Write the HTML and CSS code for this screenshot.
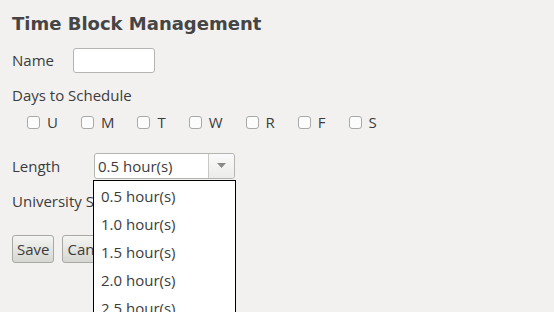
FILE: index.html
```html
<!DOCTYPE html>
<html>
<head>
<meta charset="utf-8">
<link rel="stylesheet" href="styles.css">
</head>
<body>
<div class="page">
  <h1 class="title">Time Block Management</h1>
  <div class="row name-row">
    <span class="label">Name</span>
    <span class="text-input"></span>
  </div>
  <div class="days-label">Days to Schedule</div>
  <div class="days">
    <span class="day"><span class="cb"></span>U</span>
    <span class="day"><span class="cb"></span>M</span>
    <span class="day"><span class="cb"></span>T</span>
    <span class="day"><span class="cb"></span>W</span>
    <span class="day"><span class="cb"></span>R</span>
    <span class="day"><span class="cb"></span>F</span>
    <span class="day"><span class="cb"></span>S</span>
  </div>
  <div class="row length-row">
    <span class="label">Length</span>
    <div class="select-wrap">
      <div class="select">
        <span class="select-value">0.5 hour(s)</span>
        <span class="select-arrow"><svg width="9" height="6" viewBox="0 0 9 6"><path d="M0 0 H9 L4.5 5 Z" fill="#8a8a8a"/></svg></span>
      </div>
      <ul class="dropdown">
        <li>0.5 hour(s)</li>
        <li>1.0 hour(s)</li>
        <li>1.5 hour(s)</li>
        <li>2.0 hour(s)</li>
        <li>2.5 hour(s)</li>
      </ul>
    </div>
  </div>
  <div class="univ">University Schedule</div>
  <div class="buttons">
    <button class="btn">Save</button>
    <button class="btn">Cancel</button>
  </div>
</div>
</body>
</html>
```

FILE: styles.css
```css
html, body {
  margin: 0;
  padding: 0;
  background: #f2f1f0;
}
body {
  font-family: "Open Sans", sans-serif;
  font-size: 15px;
  color: #3c3c3c;
  overflow: hidden;
  height: 312px;
}
.page {
  padding: 12px 12px 0 12px;
}
.title {
  font-family: "DejaVu Sans", sans-serif;
  font-weight: bold;
  font-size: 18px;
  color: #454545;
  margin: 0;
  line-height: 24px;
}
.row {
  display: flex;
  align-items: center;
}
.name-row {
  margin-top: 11px;
  height: 26px;
}
.name-row .label {
  width: 61px;
}
.text-input {
  display: block;
  width: 80px;
  height: 23px;
  background: #fff;
  border: 1px solid #b4b4b0;
  border-radius: 3px;
}
.days-label {
  margin-top: 12px;
  line-height: 20px;
}
.days {
  display: flex;
  margin-top: 7px;
  padding-left: 15px;
  height: 20px;
  align-items: center;
}
.day {
  display: flex;
  align-items: center;
  margin-right: 23px;
}
.cb {
  width: 11px;
  height: 11px;
  border: 1px solid #a9a9a5;
  border-radius: 3px;
  background: #fcfcfc;
  margin-right: 7px;
}
.length-row {
  margin-top: 21px;
  height: 26px;
}
.length-row .label {
  width: 82px;
}
.select-wrap {
  position: relative;
}
.select {
  display: flex;
  width: 139px;
  height: 24px;
  border: 1px solid #b4b4b0;
  border-radius: 3px;
  background: #fff;
  align-items: stretch;
}
.select-value {
  flex: 1;
  padding-left: 3px;
  line-height: 24px;
}
.select-arrow {
  width: 25px;
  border-left: 1px solid #c8c8c4;
  background: linear-gradient(#fafafa, #ececea);
  display: flex;
  align-items: center;
  justify-content: center;
  border-radius: 0 3px 3px 0;
}
.dropdown {
  position: absolute;
  left: -1px;
  top: 27px;
  width: 141px;
  margin: 0;
  padding: 1px 0 0 0;
  list-style: none;
  background: #fff;
  border: 1px solid #000;
  height: 200px;
}
.dropdown li {
  line-height: 28px;
  padding-left: 7px;
}
.univ {
  margin-top: 12px;
  line-height: 20px;
}
.buttons {
  display: flex;
  gap: 8px;
  margin-top: 24px;
}
.btn {
  font-family: "Open Sans", sans-serif;
  font-size: 15px;
  color: #3c3c3c;
  height: 28px;
  padding: 0 4px;
  border: 1px solid #a8a8a4;
  border-radius: 3px;
  background: linear-gradient(#f4f4f2, #d6d6d2);
}
```
